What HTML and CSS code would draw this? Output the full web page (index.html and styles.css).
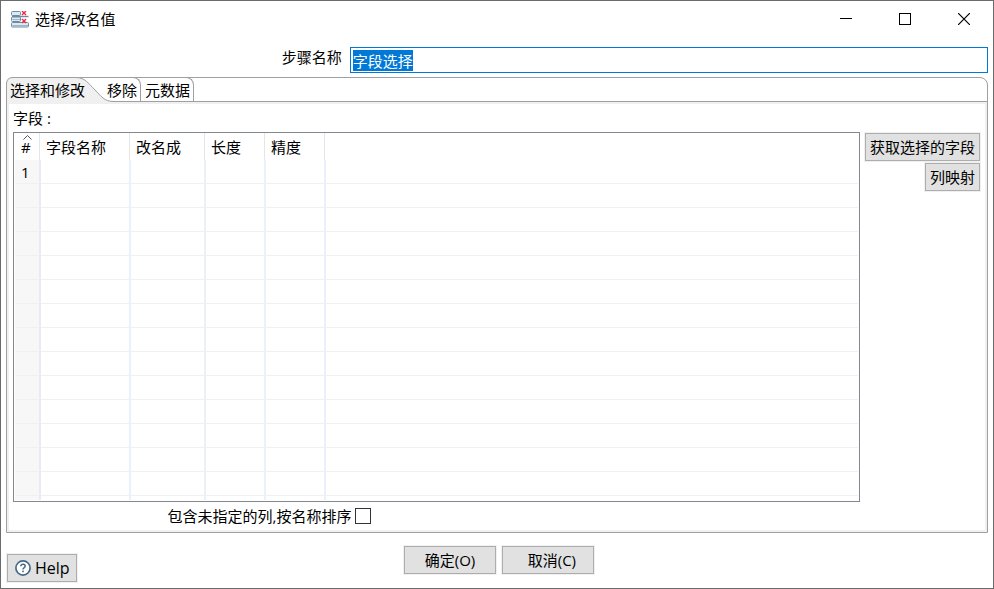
FILE: index.html
```html
<!DOCTYPE html>
<html lang="zh-CN">
<head>
    <meta charset="UTF-8">
    <meta name="viewport" content="width=device-width, initial-scale=1.0">
    <title>选择/改名值</title>
    <link rel="stylesheet" href="styles.css">
</head>
<body>

<div class="dialog">
    <header class="titlebar">
        <svg class="app-icon" width="18" height="17" viewBox="0 0 18 17">
            <rect x="0.5" y="0.5" width="9" height="4" rx="1" fill="#dfe8ee" stroke="#6d8ca3"/>
            <path d="M1 5.5H17.5" stroke="#6d8ca3" stroke-width="1.4"/>
            <rect x="0.5" y="6" width="9" height="4.5" rx="1" fill="#dfe8ee" stroke="#6d8ca3"/>
            <path d="M1.5 8.5H9" stroke="#9fb6c6"/>
            <rect x="0.5" y="11.5" width="17" height="4.5" rx="1" fill="#dfe8ee" stroke="#6d8ca3"/>
            <path d="M1.5 14.5H17" stroke="#9fb6c6"/>
            <path d="M11 0l4 4M15 0l-4 4M11 8l4 4M15 8l-4 4" stroke="#ed2947" stroke-width="1.4" fill="none"/>
        </svg>
        <h1>选择/改名值</h1>
        <div class="window-buttons">
            <button type="button" aria-label="最小化">
                <svg width="12" height="12"><path d="M0 5.5h12" stroke="#000"/></svg>
            </button>
            <button type="button" aria-label="最大化">
                <svg width="12" height="12"><rect x="0.5" y="0.5" width="11" height="11" fill="none" stroke="#000"/></svg>
            </button>
            <button type="button" aria-label="关闭">
                <svg width="12" height="12"><path d="M0 0l12 12M12 0L0 12" stroke="#000" stroke-width="1.2"/></svg>
            </button>
        </div>
    </header>

    <div class="step-row">
        <label for="stepName">步骤名称</label>
        <input type="text" id="stepName" value="字段选择" autofocus>
    </div>

    <div class="folder">
        <div class="tabs" role="tablist">
            <svg class="tab-shape" width="108" height="27">
                <path d="M0.5 27V7Q0.5 0.5 7 0.5H70C79 0.5 83 7 89 13C95 19 98 24.5 108 24.5V27Z" fill="#f0f0f0"/>
                <path d="M0.5 27V7Q0.5 0.5 7 0.5H70C79 0.5 83 7 89 13C95 19 98 24.5 108 24.5" fill="none" stroke="#a0a0a0"/>
            </svg>
            <button type="button" role="tab" class="tab active" aria-selected="true">选择和修改</button>
            <button type="button" role="tab" class="tab">移除</button>
            <button type="button" role="tab" class="tab">元数据</button>
        </div>

        <div class="panel">
            <div class="fields-label">字段 :</div>
            <div class="fields">
                <div class="grid">
                    <table>
                        <colgroup>
                            <col class="col-num"><col class="col-name"><col class="col-rename"><col class="col-size"><col class="col-size"><col>
                        </colgroup>
                        <thead>
                            <tr>
                                <th class="num"><svg class="sort" width="9" height="5"><path d="M0.5 4.5l4-4 4 4" fill="none" stroke="#555"/></svg>#</th>
                                <th>字段名称</th><th>改名成</th><th>长度</th><th>精度</th><th></th>
                            </tr>
                        </thead>
                        <tbody>
                            <tr><td class="num">1</td><td></td><td></td><td></td><td></td><td></td></tr>
                            <tr><td class="num"></td><td></td><td></td><td></td><td></td><td></td></tr>
                            <tr><td class="num"></td><td></td><td></td><td></td><td></td><td></td></tr>
                            <tr><td class="num"></td><td></td><td></td><td></td><td></td><td></td></tr>
                            <tr><td class="num"></td><td></td><td></td><td></td><td></td><td></td></tr>
                            <tr><td class="num"></td><td></td><td></td><td></td><td></td><td></td></tr>
                            <tr><td class="num"></td><td></td><td></td><td></td><td></td><td></td></tr>
                            <tr><td class="num"></td><td></td><td></td><td></td><td></td><td></td></tr>
                            <tr><td class="num"></td><td></td><td></td><td></td><td></td><td></td></tr>
                            <tr><td class="num"></td><td></td><td></td><td></td><td></td><td></td></tr>
                            <tr><td class="num"></td><td></td><td></td><td></td><td></td><td></td></tr>
                            <tr><td class="num"></td><td></td><td></td><td></td><td></td><td></td></tr>
                            <tr><td class="num"></td><td></td><td></td><td></td><td></td><td></td></tr>
                            <tr><td class="num"></td><td></td><td></td><td></td><td></td><td></td></tr>
                            <tr><td class="num"></td><td></td><td></td><td></td><td></td><td></td></tr>
                        </tbody>
                    </table>
                </div>
                <div class="side">
                    <button type="button" class="btn">获取选择的字段</button>
                    <button type="button" class="btn">列映射</button>
                </div>
            </div>
            <div class="option-row">
                <label for="sortRest">包含未指定的列,按名称排序</label>
                <input type="checkbox" id="sortRest">
            </div>
        </div>
    </div>

    <footer class="footer">
        <button type="button" class="btn help">
            <svg width="16" height="16" viewBox="0 0 16 16">
                <circle cx="8" cy="8" r="7.1" fill="#fff" stroke="#456a88" stroke-width="1.7"/>
                <path d="M5.8 6.2Q5.9 4.3 8 4.3Q10.2 4.3 10.2 6.1Q10.2 7.1 9 7.8Q8 8.4 8 9.4" fill="none" stroke="#456a88" stroke-width="1.5"/>
                <rect x="7.2" y="10.6" width="1.6" height="1.6" fill="#456a88"/>
            </svg>
            Help
        </button>
        <div class="actions">
            <button type="button" class="btn">确定(O)</button>
            <button type="button" class="btn">&nbsp;&nbsp;取消(C)</button>
        </div>
    </footer>
</div>

<script>
    const stepName = document.getElementById('stepName');
    stepName.focus();
    stepName.select();
</script>

</body>
</html>
```
FILE: styles.css
```css
* {
    box-sizing: border-box;
}
body {
    margin: 0;
    background-color: #fff;
}
body, button, input {
    font-family: "Open Sans", "Noto Sans CJK SC", sans-serif;
    font-size: 15px;
    line-height: 20px;
    color: #000;
}
svg {
    display: block;
}
.dialog {
    display: flex;
    flex-direction: column;
    height: 100vh;
    border: 1px solid #6b6b6b;
}

/* title bar */
.titlebar {
    display: flex;
    align-items: center;
    height: 36px;
    padding-left: 10px;
    gap: 6px;
}
.titlebar h1 {
    margin: 0;
    font-size: 15px;
    font-weight: normal;
}
.window-buttons {
    display: flex;
    margin-left: auto;
}
.window-buttons button {
    display: flex;
    align-items: center;
    justify-content: center;
    width: 59px;
    height: 36px;
    padding: 0;
    border: none;
    background: none;
}

/* step name */
.step-row {
    display: grid;
    grid-template-columns: 35% 1fr;
    margin: 10px 5px 4px;
}
.step-row label {
    padding-right: 8px;
    text-align: right;
}
.step-row input {
    min-width: 0;
    height: 26px;
    padding: 2px;
    border: 1px solid #0078d7;
    border-radius: 0;
    outline: none;
}
.step-row input::selection {
    background-color: #0078d7;
    color: #fff;
}

/* tab folder */
.folder {
    display: flex;
    flex: 1;
    flex-direction: column;
    min-height: 0;
    margin: 0 5px;
    border: 1px solid #a0a0a0;
    border-radius: 8px 8px 0 0;
}
.tabs {
    position: relative;
    display: flex;
    height: 24px;
    border-bottom: 1px solid #a0a0a0;
}
.tab-shape {
    position: absolute;
    left: -1px;
    top: -1px;
}
.tab {
    position: relative;
    margin-top: -1px;
    padding: 1px 3px 0 4px;
    border: 1px solid #a0a0a0;
    border-width: 1px 1px 0 0;
    border-radius: 0 8px 0 0;
    background: none;
}
.tab.active {
    margin-right: 14px;
    padding-left: 3px;
    border-color: transparent;
}
.panel {
    display: flex;
    flex: 1;
    flex-direction: column;
    min-height: 0;
    padding: 0 5px 0 4px;
    border: 2px solid #f0f0f0;
}
.fields-label {
    padding: 4px 0;
}
.fields {
    display: flex;
    flex: 1;
    gap: 5px;
    min-height: 0;
}

/* fields table */
.grid {
    flex: 1;
    padding: 0 1px 1px;
    border: 1px solid #828790;
    overflow: clip;
    overflow-clip-margin: content-box;
}
table {
    width: 100%;
    table-layout: fixed;
    border-spacing: 0;
}
.col-num {
    width: 26px;
}
.col-name {
    width: 90px;
}
.col-rename {
    width: 75px;
}
.col-size {
    width: 60px;
}
th {
    position: relative;
    height: 27px;
    padding: 0 0 0 5px;
    background: linear-gradient(#e5e5e5, #e5e5e5) calc(100% - 1px) 0 / 1px 100% no-repeat;
    font-weight: normal;
    text-align: left;
    white-space: nowrap;
}
td {
    height: 24px;
    padding: 0;
    border-right: 2px solid #eaf1fb;
    border-bottom: 1px solid #f0f0f0;
}
th:last-child, td:last-child {
    border-right: none;
    background: none;
}
.num {
    padding: 0 0 0 6px;
}
td.num {
    background-color: #f7f7f7;
    border-right-color: #e8ebf2;
}
.sort {
    position: absolute;
    left: 8px;
    top: 2px;
}

/* buttons */
.btn {
    height: 28px;
    padding: 0 4px;
    border: 1px solid #adadad;
    border-radius: 0;
    background-color: #e1e1e1;
    box-shadow: 0 0 0 1px #f0f0f0;
    white-space: nowrap;
}
.side {
    display: flex;
    flex-direction: column;
    align-items: flex-end;
    gap: 2px;
    padding-top: 1px;
}
.option-row {
    display: grid;
    grid-template-columns: 35% auto;
    justify-content: start;
    align-items: center;
    column-gap: 4px;
    height: 28px;
}
.option-row label {
    text-align: right;
    white-space: nowrap;
}
.option-row input {
    appearance: none;
    width: 16px;
    height: 16px;
    margin: 0;
    border: 1px solid #333;
    background-color: #fff;
}
.option-row input:checked {
    background-color: #0078d7;
}
.footer {
    display: grid;
    grid-template-columns: 1fr auto 1fr;
    height: 55px;
    padding: 13px 2px 6px 6px;
}
.help {
    display: flex;
    align-items: center;
    align-self: end;
    justify-self: start;
    gap: 4px;
    padding: 0 6px 0 7px;
    font-size: 16px;
}
.actions {
    display: flex;
    gap: 6px;
}
.actions .btn {
    width: 92px;
}
```
